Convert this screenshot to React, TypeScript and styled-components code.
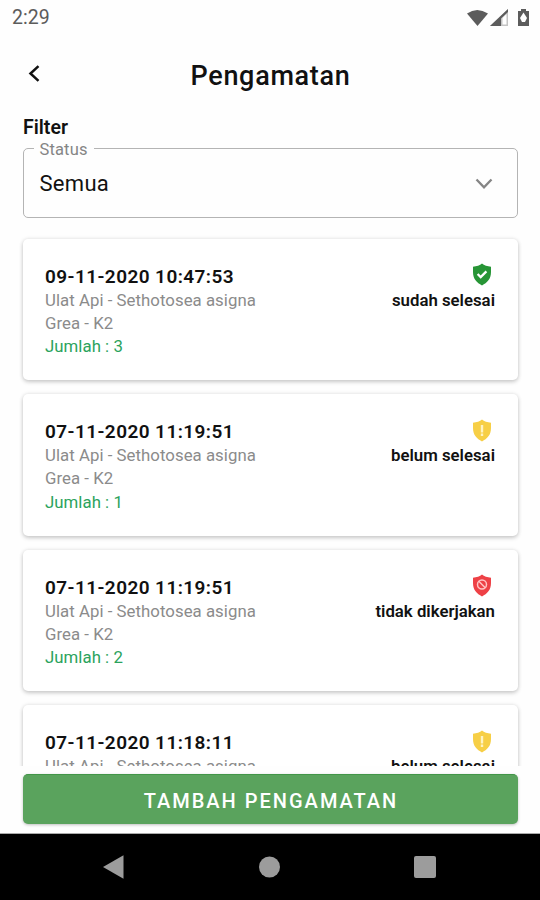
import React from "react";
import styled, { createGlobalStyle } from "styled-components";

const GlobalStyle = createGlobalStyle`
  * { box-sizing: border-box; }
  body { margin: 0; background: #fff; font-family: Roboto, sans-serif; color: #111; }
`;

const Screen = styled.div`
  width: 540px;
  height: 900px;
  display: flex;
  flex-direction: column;
  overflow: hidden;
  background: #fefefe;
`;

const StatusBar = styled.div`
  height: 36px;
  flex: none;
  display: flex;
  align-items: center;
  justify-content: space-between;
  padding: 0 10px 0 12px;
  color: #5c5c5c;
`;

const Clock = styled.span`
  font-size: 19.5px;
  line-height: 36px;
`;

const StatusIcons = styled.svg`
  display: block;
`;

const Header = styled.header`
  height: 78px;
  flex: none;
  display: grid;
  grid-template-columns: 68px 1fr 68px;
  align-items: center;
`;

const BackButton = styled.button`
  border: 0;
  padding: 0 0 3px 28px;
  background: none;
  display: flex;
`;

const Title = styled.h1`
  margin: 0;
  padding: 1px 0 0 1px;
  text-align: center;
  font-size: 27px;
  font-weight: 500;
  line-height: 32px;
  letter-spacing: 0.7px;
`;

const FilterLabel = styled.div`
  height: 34px;
  padding: 3px 23px 0;
  flex: none;
  font-size: 19.5px;
  line-height: 22px;
  font-weight: 600;
`;

const Select = styled.div`
  position: relative;
  height: 70px;
  margin: 0 22.5px;
  flex: none;
  display: flex;
  align-items: center;
  justify-content: space-between;
  padding: 1px 24px 0 16px;
  border: 1.5px solid #b4b4b4;
  border-radius: 5px;
`;

const FloatingLabel = styled.span`
  position: absolute;
  left: 10px;
  top: -9px;
  padding: 0 6px;
  background: #fefefe;
  color: #858585;
  font-size: 16.5px;
  line-height: 19px;
  letter-spacing: 0.15px;
`;

const SelectValue = styled.span`
  font-size: 22px;
  line-height: 26px;
  letter-spacing: 0.3px;
`;

const List = styled.main`
  flex: none;
  height: 547.5px;
  padding: 20.5px 22.5px 0;
  overflow: hidden;
`;

const Card = styled.article`
  height: 141.5px;
  margin-bottom: 14px;
  padding: 24.5px 22.5px 0;
  display: flex;
  justify-content: space-between;
  border-radius: 5px;
  background: #fff;
  box-shadow: 0 2px 4px rgba(0, 0, 0, 0.18), 0 0 4px rgba(0, 0, 0, 0.1);
`;

const Details = styled.div`
  display: flex;
  flex-direction: column;
`;

const Timestamp = styled.div`
  font-size: 19px;
  font-weight: 600;
  line-height: 25px;
  padding-top: 0.7px;
  letter-spacing: 0.42px;
`;

const Line = styled.div<{ $accent?: boolean }>`
  font-size: 16.8px;
  line-height: 23.3px;
  letter-spacing: 0.04px;
  color: ${(p) => (p.$accent ? "#2ba35c" : "#8b8b8b")};
`;

const Status = styled.div`
  display: flex;
  flex-direction: column;
  align-items: flex-end;
`;

const StatusText = styled.div`
  font-size: 16.8px;
  font-weight: 600;
  line-height: 23px;
`;

const ShieldSvg = styled.svg`
  display: block;
  margin: 0 3px 2.5px 0;
`;

const Footer = styled.footer`
  height: 68px;
  flex: none;
  padding: 8px 22.5px 0;
  border-bottom: 1px solid #aaa;
  background: #fefefe;
`;

const AddButton = styled.button`
  display: block;
  width: 100%;
  height: 50.5px;
  padding: 3px 0 0 2px;
  border: 0;
  border-top: 1px solid #429548;
  border-radius: 5px;
  background: #5aa35d;
  box-shadow: 0 1px 3px rgba(0, 0, 0, 0.25);
  color: #fff;
  font-family: inherit;
  font-size: 20px;
  font-weight: 500;
  letter-spacing: 2px;
`;

const NavBar = styled.nav`
  flex: 1;
  display: flex;
  align-items: center;
  justify-content: space-between;
  padding: 0 104px 0 103px;
  background: #000;
`;

const NavIcon = styled.svg`
  display: block;
  fill: #9c9c9c;
`;

type State = "done" | "pending" | "skipped";

const shieldColors: Record<State, string> = {
  done: "#279536",
  pending: "#f7cf46",
  skipped: "#ee4146",
};

function Shield({ state }: { state: State }) {
  return (
    <ShieldSvg width="20" height="23" viewBox="0 0 20 23">
      <path
        d="M10 .6C8 2.700 4.500 3.500 1 3.800V9c0 7 3.800 10.800 9 13.400C15.200 19.800 19 16 19 9V3.800C15.500 3.500 12 2.700 10 .6Z"
        fill={shieldColors[state]}
      />
      {state === "done" && (
        <path d="m5.600 11 3.100 3.100 5.700-5.700" fill="none" stroke="#fff" strokeWidth="2.300" />
      )}
      {state === "pending" && (
        <path d="M10 6v7.500M10 14.500v2.500" fill="none" stroke="#fff3c2" strokeWidth="2.400" />
      )}
      {state === "skipped" && (
        <g fill="none" stroke="#ffc4c4" strokeWidth="1.500">
          <circle cx="10" cy="10.500" r="4.500" />
          <path d="m6.800 7.300 6.400 6.400" />
        </g>
      )}
    </ShieldSvg>
  );
}

const records: { time: string; count: number; state: State; status: string }[] = [
  { time: "09-11-2020 10:47:53", count: 3, state: "done", status: "sudah selesai" },
  { time: "07-11-2020 11:19:51", count: 1, state: "pending", status: "belum selesai" },
  { time: "07-11-2020 11:19:51", count: 2, state: "skipped", status: "tidak dikerjakan" },
  { time: "07-11-2020 11:18:11", count: 1, state: "pending", status: "belum selesai" },
];

export default function App() {
  return (
    <>
      <GlobalStyle />
      <Screen>
        <StatusBar>
          <Clock>2:29</Clock>
          <StatusIcons width="64" height="20" viewBox="0 0 64 20" fill="#5c5c5c">
            <path d="M1 5.500Q11-1.500 22 5.500L11.500 18Z" />
            <path d="M24 18 42 1v17Z" fill="#c4c4c4" />
            <path d="M24 18 42 1v3L35 10.500V18Z" />
            <path d="M36.500 10v6.500h4V6Z" fill="#fff" />
            <path d="M52 3h3V1h5v2h3v15H52Z" />
            <path d="m57.500 4.500-3.500 5.500 2 4h3l2-4Z" fill="#fff" />
          </StatusIcons>
        </StatusBar>
        <Header>
          <BackButton aria-label="Kembali">
            <svg width="12" height="17" viewBox="0 0 12 17">
              <path d="m10.500 1.200-8 7.300 8 7.300" fill="none" stroke="#111" strokeWidth="2.500" />
            </svg>
          </BackButton>
          <Title>Pengamatan</Title>
        </Header>
        <FilterLabel>Filter</FilterLabel>
        <Select>
          <FloatingLabel>Status</FloatingLabel>
          <SelectValue>Semua</SelectValue>
          <svg width="18" height="12" viewBox="0 0 18 12">
            <path d="m1.500 1.500 7.500 7.800 7.500-7.800" fill="none" stroke="#858585" strokeWidth="2.300" />
          </svg>
        </Select>
        <List>
          {records.map((r, i) => (
            <Card key={i}>
              <Details>
                <Timestamp>{r.time}</Timestamp>
                <Line>Ulat Api - Sethotosea asigna</Line>
                <Line>Grea - K2</Line>
                <Line $accent>Jumlah : {r.count}</Line>
              </Details>
              <Status>
                <Shield state={r.state} />
                <StatusText>{r.status}</StatusText>
              </Status>
            </Card>
          ))}
        </List>
        <Footer>
          <AddButton>TAMBAH PENGAMATAN</AddButton>
        </Footer>
        <NavBar>
          <NavIcon width="21" height="24" viewBox="0 0 21 24">
            <path d="M0 12 20.500.3v23.400Z" />
          </NavIcon>
          <NavIcon width="22" height="22" viewBox="0 0 22 22">
            <circle cx="11.500" cy="11" r="10.500" />
          </NavIcon>
          <NavIcon width="22" height="22" viewBox="0 0 22 22">
            <rect width="22" height="22" rx="2" />
          </NavIcon>
        </NavBar>
      </Screen>
    </>
  );
}
